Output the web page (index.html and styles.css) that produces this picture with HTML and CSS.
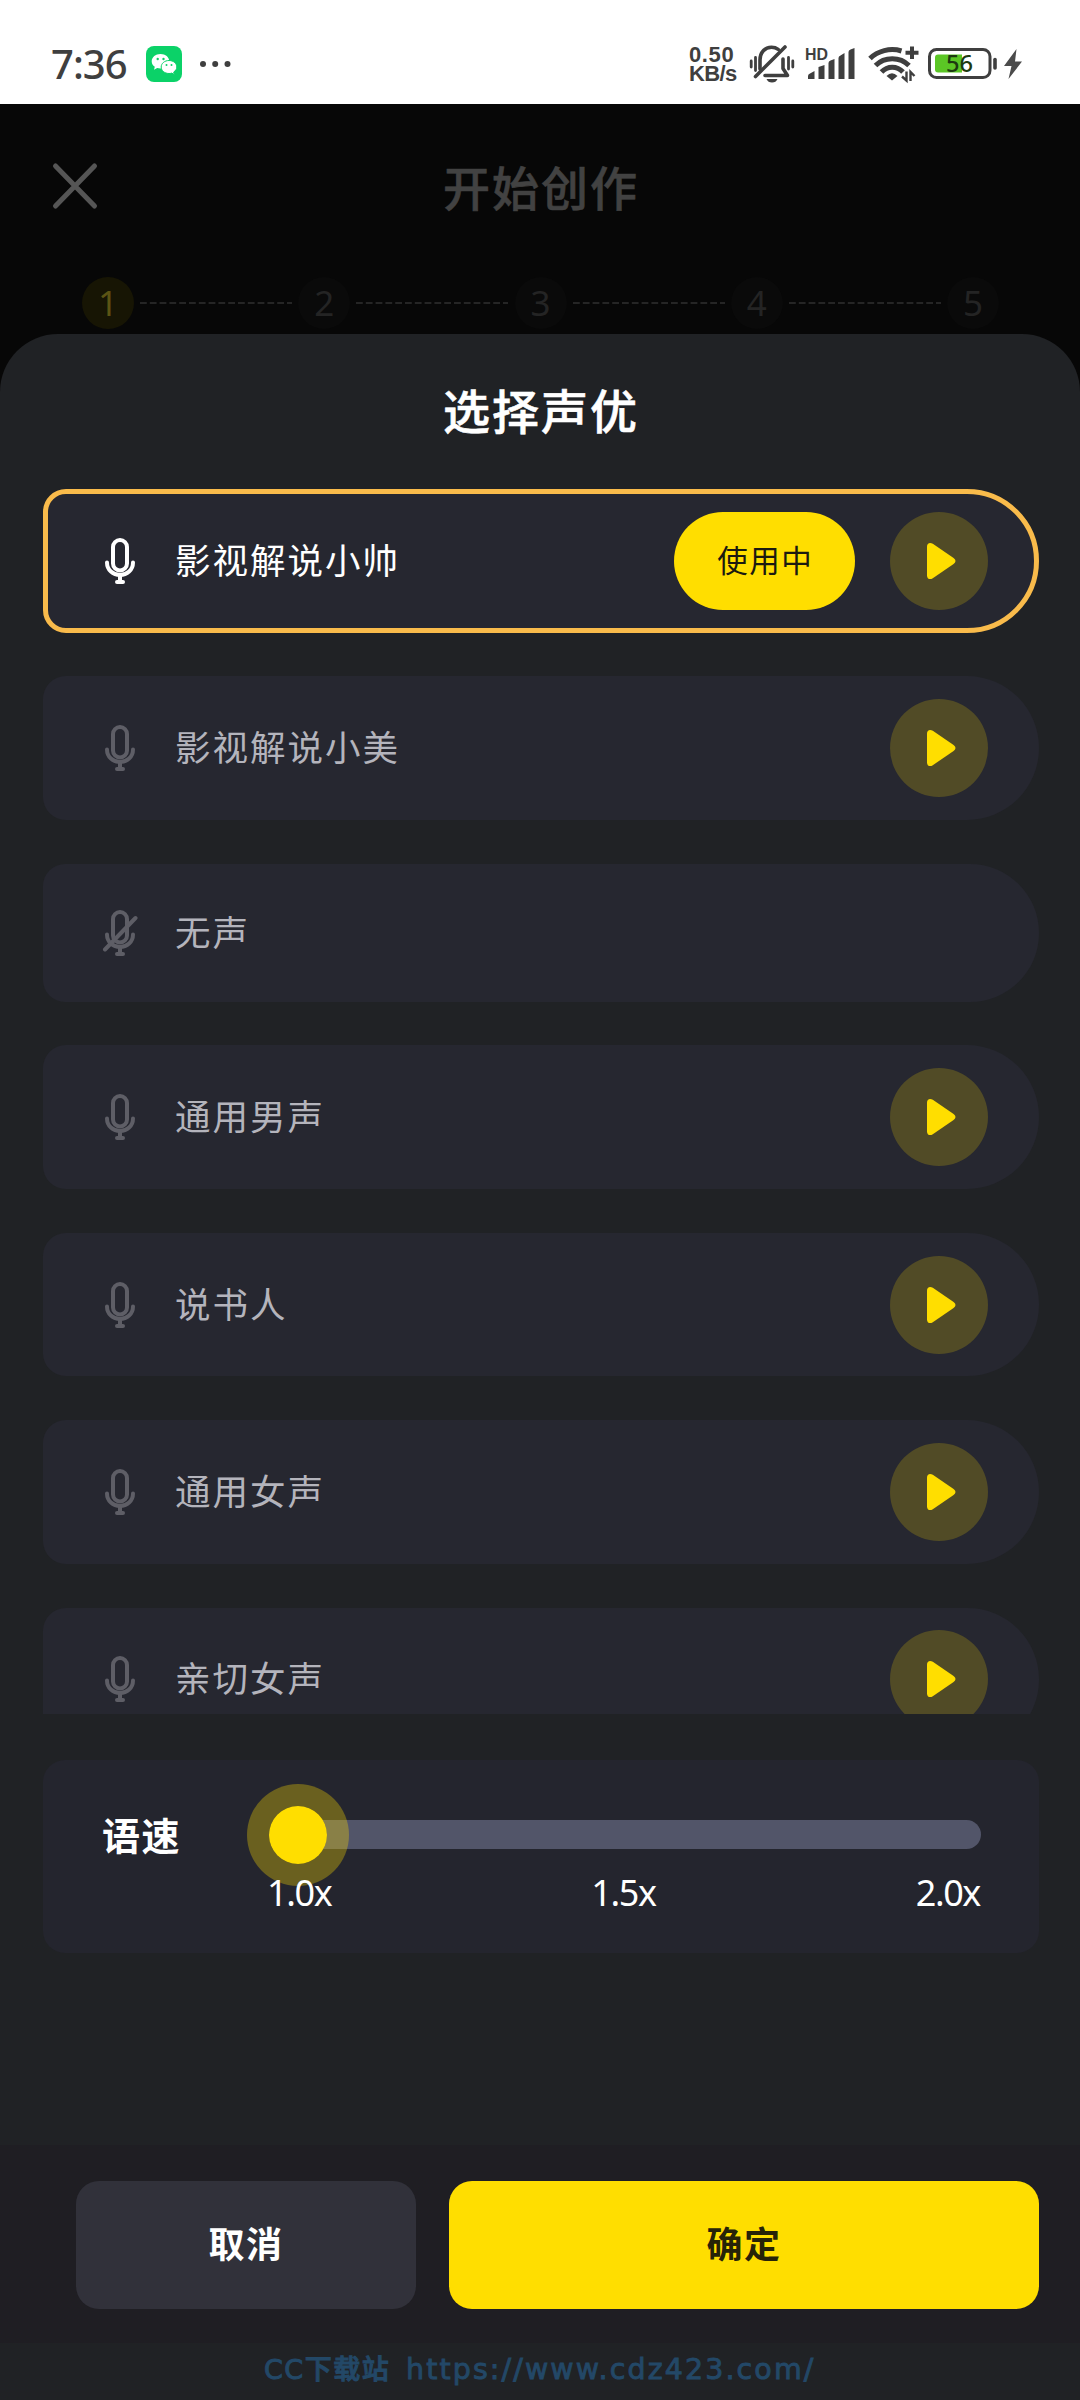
FILE: index.html
```html
<!DOCTYPE html>
<html lang="zh-CN">
<head>
<meta charset="utf-8">
<title>选择声优</title>
<link rel="stylesheet" href="styles.css">
</head>
<body>
<svg class="defs" width="0" height="0" aria-hidden="true">
  <symbol id="mic" viewBox="0 0 36 48">
    <g fill="none" stroke="currentColor" stroke-width="4" stroke-linecap="round">
      <rect x="11" y="3" width="14" height="30.500" rx="7"/>
      <path d="M5 25.500C5 33 11 38 18 38S31 33 31 25.500"/>
      <path d="M18 38V45M15 45H21"/>
    </g>
  </symbol>
  <symbol id="mic-off" viewBox="0 0 36 48">
    <use href="#mic"/>
    <path d="M3 40.500L33.500 9" fill="none" stroke="currentColor" stroke-width="4" stroke-linecap="round"/>
  </symbol>
  <symbol id="play" viewBox="0 0 30 38">
    <path d="M0 4C0 .5 3 -.8 6 1.200L27.500 16Q31.500 19 27.500 22L6 36.800C3 38.800 0 37.500 0 34Z" fill="currentColor"/>
  </symbol>
</svg>

<header class="status">
  <span class="time">7:36</span>
  <svg class="wechat" width="36" height="36" viewBox="0 0 36 36">
    <rect width="36" height="36" rx="8" fill="#0bd268"/>
    <path d="M14.500 8C9.500 8 5.700 11.200 5.700 15.200c0 2.300 1.200 4.300 3.100 5.600L8 23.700l3.200-1.700c1 .3 2.200.4 3.300.4 5 0 8.800-3.200 8.800-7.200S19.500 8 14.500 8Z" fill="#fff"/>
    <path d="M23 14.500c-4.400 0-7.800 2.900-7.800 6.500s3.400 6.500 7.800 6.500c1 0 1.900-.1 2.700-.4l2.700 1.400-.7-2.500c1.900-1.200 3.100-3 3.100-5 0-3.600-3.400-6.500-7.800-6.500Z" fill="#fff" stroke="#0bd268"/>
    <g fill="#0bd268"><circle cx="11.700" cy="13" r="1.200"/><circle cx="17.500" cy="13" r="1.200"/><circle cx="20.500" cy="19" r="1"/><circle cx="25.500" cy="19" r="1"/></g>
  </svg>
  <svg class="more" width="32" height="8" viewBox="0 0 32 8" fill="#3f3f3f"><circle cx="4" cy="4" r="3"/><circle cx="16.200" cy="4" r="3"/><circle cx="28.500" cy="4" r="3"/></svg>
  <div class="net"><span>0.50</span><span class="unit">KB/s</span></div>
  <svg class="bell" width="46" height="40" viewBox="0 0 46 40" fill="none" stroke="#3f3f3f" stroke-width="3.600" stroke-linecap="round" stroke-linejoin="round">
    <path d="M6.500 32.500L36 3"/>
    <path d="M11 25V16C11 8.500 16 3.300 22.500 3.300 25 3.300 27.300 4 29.200 5.400"/>
    <path d="M16 31.500H38.500L34 24.500V15"/>
    <path d="M17.500 35H28.500Q27 38.500 23 38.500T17.500 35Z" fill="#3f3f3f" stroke="none"/>
    <path d="M2.200 17V23M6.500 13.500V26.500M39.500 13.500V25M43.800 17V23" stroke-width="2.800"/>
  </svg>
  <svg class="signal" width="52" height="40" viewBox="0 0 52 40" fill="#3f3f3f">
    <text class="hd" x="1" y="16" textLength="23" lengthAdjust="spacingAndGlyphs">HD</text>
    <path d="M4 35V32Q4 30 6 29.500L10.500 27V35ZM14.500 35V23L20.500 21V35ZM24.500 35V19Q24.500 17 26.500 16.500L30.500 15V35ZM34.500 35V14Q34.500 12 36.500 11.500L40.500 9V35ZM44.500 35V8Q44.500 6 46.500 5.500L50.500 4V35Z"/>
  </svg>
  <svg class="wifi" width="54" height="40" viewBox="0 0 54 40" fill="none" stroke="#3f3f3f" stroke-width="5">
    <path d="M3 14.500C10.500 7 23 3.500 34.500 7"/>
    <path d="M8.500 21.500C17.500 12.500 33 12.500 42 21.500"/>
    <path d="M14.500 28C20.500 21.500 30 21.500 36 28"/>
    <path d="M19.500 32Q25 26.500 30.500 32L25 36.500Z" fill="#3f3f3f" stroke="none"/>
    <path d="M45 2.500V15M38.500 8.800H51.500" stroke-width="4"/>
    <path d="M39.500 27.500V36.500L35 32.500M43.500 37V28L47.500 32" stroke-width="2.400"/>
  </svg>
  <svg class="battery" width="70" height="32" viewBox="0 0 70 32">
    <rect x="1.500" y="1.500" width="60.500" height="28" rx="7" fill="#fff" stroke="#3f3f3f" stroke-width="3"/>
    <path d="M10 6.500H34V24.500H10Q7 24.500 7 21.500V9.500Q7 6.500 10 6.500Z" fill="#5bc625"/>
    <path d="M67 11.500V20" stroke="#3f3f3f" stroke-width="3.600" stroke-linecap="round"/>
    <text class="percent" x="18" y="24" textLength="27" lengthAdjust="spacingAndGlyphs">56</text>
  </svg>
  <svg class="bolt" width="18" height="32" viewBox="0 0 18 32"><path d="M12.500 1L0 18H7.500L4.500 31 18 13.500H11Z" fill="#4b4b4b"/></svg>
</header>

<main class="page">
  <div class="navbar">
    <svg class="close" width="46" height="48" viewBox="0 0 46 48"><path d="M3.500 4L42.500 44M42.500 4L3.500 44" stroke="#555" stroke-width="5" stroke-linecap="round"/></svg>
    <h1 class="page-title">开始创作</h1>
  </div>
  <div class="steps">
    <span class="step active">1</span><svg class="dash"><line x1="0" y1="1" x2="154" y2="1"/></svg>
    <span class="step">2</span><svg class="dash"><line x1="0" y1="1" x2="154" y2="1"/></svg>
    <span class="step">3</span><svg class="dash"><line x1="0" y1="1" x2="154" y2="1"/></svg>
    <span class="step">4</span><svg class="dash"><line x1="0" y1="1" x2="154" y2="1"/></svg>
    <span class="step">5</span>
  </div>
</main>

<section class="sheet">
  <h2 class="sheet-title">选择声优</h2>
  <div class="voices">
    <div class="voice selected"><svg class="mic"><use href="#mic"/></svg><span class="name">影视解说小帅</span><span class="badge">使用中</span><span class="play"><svg><use href="#play"/></svg></span></div>
    <div class="voice"><svg class="mic"><use href="#mic"/></svg><span class="name">影视解说小美</span><span class="play"><svg><use href="#play"/></svg></span></div>
    <div class="voice mute"><svg class="mic"><use href="#mic-off"/></svg><span class="name">无声</span></div>
    <div class="voice"><svg class="mic"><use href="#mic"/></svg><span class="name">通用男声</span><span class="play"><svg><use href="#play"/></svg></span></div>
    <div class="voice"><svg class="mic"><use href="#mic"/></svg><span class="name">说书人</span><span class="play"><svg><use href="#play"/></svg></span></div>
    <div class="voice"><svg class="mic"><use href="#mic"/></svg><span class="name">通用女声</span><span class="play"><svg><use href="#play"/></svg></span></div>
    <div class="voice"><svg class="mic"><use href="#mic"/></svg><span class="name">亲切女声</span><span class="play"><svg><use href="#play"/></svg></span></div>
  </div>
  <div class="speed">
    <span class="speed-label">语速</span>
    <div class="slider">
      <div class="track"><span class="thumb"></span></div>
      <div class="ticks"><span>1.0x</span><span>1.5x</span><span>2.0x</span></div>
    </div>
  </div>
  <div class="actions">
    <button class="btn cancel">取消</button>
    <button class="btn confirm">确定</button>
  </div>
  <footer class="site"><span class="site-name">CC下载站</span><span class="site-url">https://www.cdz423.com/</span></footer>
</section>
</body>
</html>
```
FILE: styles.css
```css
* { box-sizing: border-box; }
body {
  margin: 0;
  width: 1080px;
  height: 2400px;
  overflow: hidden;
  display: flex;
  flex-direction: column;
  background: #070707;
  color: #fff;
  font-family: "Noto Sans", "Noto Sans CJK SC", sans-serif;
}
.defs { position: absolute; }
svg { display: block; flex: none; overflow: visible; }

.status {
  height: 104px;
  flex: none;
  display: flex;
  align-items: center;
  padding: 24px 58px 0 51px;
  background: #fff;
  color: #3f3f3f;
}
.time { width: 95px; font-size: 40px; font-weight: 500; line-height: 40px; letter-spacing: -1px; }
.more { margin-left: 17px; }
.net {
  margin-left: auto;
  width: 60px;
  display: flex;
  flex-direction: column;
  font: 700 22px/19.500px "Liberation Sans", sans-serif;
  letter-spacing: 0.6px;
}
.unit { letter-spacing: -0.6px; }
.bell { margin-right: 9px; }
.signal { margin-right: 11px; }
.hd { font: 600 17px "Liberation Sans", sans-serif; }
.wifi { margin-right: 7px; }
.battery { margin-right: 6px; }
.percent { font: 500 24px "Noto Sans", sans-serif; fill: #1d3a10; }

.page { height: 230px; flex: none; }
.navbar { height: 164px; display: flex; align-items: center; padding: 0 52px; }
.page-title {
  flex: 1;
  margin: 0 46px 0 0;
  text-align: center;
  font: 500 47px/60px "Noto Sans CJK SC", sans-serif;
  letter-spacing: 2px;
  text-indent: 2px;
  color: #424242;
  -webkit-text-stroke: 0.6px #424242;
}
.steps { display: flex; align-items: center; justify-content: space-between; padding: 9px 81px 0 82px; }
.step {
  width: 52px;
  height: 52px;
  border-radius: 50%;
  background: #0a0a0a;
  color: #242424;
  text-align: center;
  font-size: 35px;
  line-height: 51px;
}
.step.active { background: #171504; color: #5c5414; }
.dash { width: 152px; height: 2px; overflow: hidden; }
.dash line { stroke: #252525; stroke-width: 2; stroke-dasharray: 6.800 3; }

.sheet {
  flex: 1;
  display: flex;
  flex-direction: column;
  border-radius: 58px 58px 0 0;
  background: #202225;
}
.sheet-title {
  margin: 45px 0 50px;
  text-align: center;
  font: 500 47px/60px "Noto Sans CJK SC", sans-serif;
  letter-spacing: 2px;
  text-indent: 2px;
  -webkit-text-stroke: 0.6px #fff;
}
.voices {
  height: 1225px;
  flex: none;
  overflow: hidden;
  padding: 0 41px 0 43px;
  display: flex;
  flex-direction: column;
  gap: 43.800px;
}
.voice {
  height: 143.600px;
  flex: none;
  display: flex;
  align-items: center;
  padding: 0 51px 0 59px;
  border-radius: 23px 72px 72px 23px;
  background: #262730;
  color: #b4b4bc;
}
.voice.mute { height: 137.800px; }
.voice.selected { padding: 0 46px 0 54px; border: 5px solid #f9bb4b; color: #fff; }
.mic { width: 36px; height: 48px; color: #5e5e66; }
.selected .mic { color: #fff; }
.name {
  margin: 0 0 4px 37px;
  flex: 1;
  font: 400 35.500px/50px "Noto Sans CJK SC", sans-serif;
  letter-spacing: 2px;
}
.badge {
  width: 181px;
  height: 98px;
  margin-right: 35px;
  border-radius: 49px;
  background: #ffde00;
  color: #1b1a10;
  text-align: center;
  font: 400 30.500px/94px "Noto Sans CJK SC", sans-serif;
  letter-spacing: 1.500px;
  text-indent: 1.500px;
}
.play {
  width: 98px;
  height: 98px;
  padding: 30px 0 0 37px;
  border-radius: 50%;
  background: #514b26;
  color: #ffde00;
}
.play svg { width: 29px; height: 38px; }

.speed {
  height: 193px;
  flex: none;
  margin: 46px 41px 0 43px;
  padding: 60px 58px 0 59px;
  display: flex;
  border-radius: 22px;
  background: #24252e;
}
.speed-label {
  width: 167px;
  font: 700 38px/27px "Noto Sans CJK SC", sans-serif;
  letter-spacing: 1.500px;
}
.slider { flex: 1; }
.track { height: 29px; border-radius: 15px; background: #525569; }
.thumb {
  display: block;
  position: relative;
  left: -22px;
  top: -36.500px;
  width: 102px;
  height: 102px;
  border: 22px solid rgba(255, 222, 0, .32);
  border-radius: 50%;
  background: #ffde00;
  background-clip: padding-box;
}
.ticks {
  position: relative;
  display: flex;
  justify-content: space-between;
  margin: 22px 1px 0 -2px;
  font-size: 36px;
  line-height: 44px;
  letter-spacing: -1.400px;
}

.actions {
  height: 198px;
  flex: none;
  margin-top: 192px;
  padding: 36px 41px 34px 76px;
  display: flex;
  gap: 33px;
  background: #1f1e23;
}
.btn {
  border: 0;
  border-radius: 23px;
  padding: 0 0 6px;
  font: 700 36px "Noto Sans CJK SC", sans-serif;
  letter-spacing: 1.500px;
}
.cancel { width: 340px; background: #31313a; color: #fff; }
.confirm { flex: 1; background: #ffde00; color: #272308; }

.site {
  display: flex;
  padding-left: 264px;
  color: #234867;
  font: 500 28.500px/53px "DejaVu Sans", "Noto Sans CJK SC", sans-serif;
}
.site-name { width: 142px; font-size: 27px; letter-spacing: 1.500px; -webkit-text-stroke: 1px #234867; }
.site-url { letter-spacing: 2.100px; -webkit-text-stroke: 0.9px #234867; }
```
